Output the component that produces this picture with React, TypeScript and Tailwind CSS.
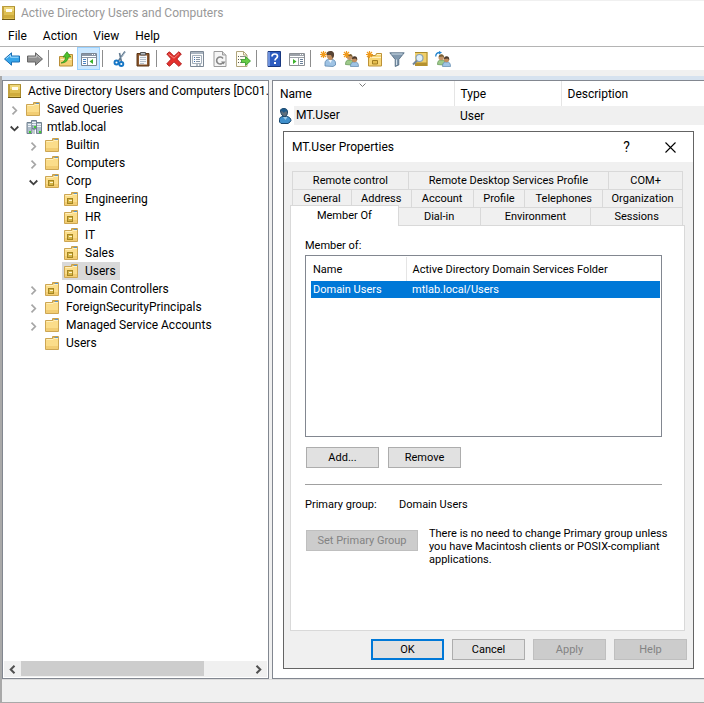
import { useState } from "react";
import type { ReactNode } from "react";

/* ICONS */

function Svg({ children, size = 16 }: { children: ReactNode; size?: number }) {
  return (
    <svg
      width={size}
      height={size}
      viewBox="0 0 16 16"
      fill="none"
      aria-hidden="true"
      className="shrink-0"
    >
      {children}
    </svg>
  );
}

function BookIcon() {
  return (
    <Svg>
      <path d="M1 1h13v14H1z" fill="#dfc052" />
      <path d="M1 1h13v1H1z" fill="#b59a3d" />
      <path d="M1 1h2v14H1z" fill="#c3a240" />
      <path d="M3 2h10v4H3z" fill="#efd779" />
      <path d="M5 4h6v3H5z" fill="#fffdf0" />
      <path d="M3 10h11v3H3z" fill="#cfac3c" />
      <path d="M13 2h1v12h-1z" fill="#a98a2b" />
      <path d="M1 14h13v1H1z" fill="#6f5a17" />
    </Svg>
  );
}

function FolderIcon() {
  return (
    <Svg>
      <path d="M7.500 5V1.500h6V5" fill="#fff3c4" stroke="#c9a04a" />
      <path d="M10 2.500h3" stroke="#4f8fd0" />
      <path d="M.5 3.500h7l1-1h5v12H.5z" fill="#fbdd8a" stroke="#cda653" />
      <path d="M10 2.500h3" stroke="#5b97cf" />
      <path d="M1.500 4.500h6.500l1-1h4" stroke="#fff0bd" />
      <path d="M1 11h12v3H1z" fill="#f2cd73" />
    </Svg>
  );
}

function UnitIcon() {
  return (
    <Svg>
      <path d="M7.500 5V1.500h6V5" fill="#fff3c4" stroke="#c9a04a" />
      <path d="M.5 3.500h7l1-1h5v12H.5z" fill="#fbdd8a" stroke="#cda653" />
      <path d="M10 2.500h3" stroke="#5b97cf" />
      <path d="M1.500 4.500h6.500l1-1h4" stroke="#fff0bd" />
      <path d="M1 11h12v3H1z" fill="#f2cd73" />
      <path d="M3 7h6v6H3z" fill="#a48522" />
      <path d="M4 8h4v4H4z" fill="#d5b548" />
      <path d="M5 9h3v1H5z" fill="#fff6cf" />
    </Svg>
  );
}

function DomainIcon() {
  return (
    <Svg>
      <path d="M5.500 1.500h5v8h-5z" fill="#a9bac9" stroke="#6d7f90" />
      <path d="M1 3.500h5v11H1z" fill="#aebdca" stroke="#72828f" />
      <path d="M10.500 3.500h5v11h-5z" fill="#aebdca" stroke="#72828f" />
      <path d="M6 3.500h4M6 5.500h4M2 5.500h3M2 7.500h3M11 5.500h4M11 7.500h4" stroke="#eef3f7" />
      <path d="M6.500 10.500h3M8 9v6" stroke="#8496a5" />
      <path d="M3 12h2v2H3zM13 12h2v2h-2zM8 7h2v2H8z" fill="#3fd12c" />
    </Svg>
  );
}

function PersonIcon() {
  return (
    <Svg>
      <path d="M1.500 14v-2.500c0-2 1.500-3 3.500-3h3.500c2.500 0 4.500 2 4.500 4l-1 1.500-2 1.500H3z" fill="#3f8fcb" stroke="#17476f" />
      <path d="M5 9l2.500 3L9.500 9" fill="#9ccbe9" />
      <path d="M2.500 3c0-2 1.500-2.500 3.500-2.500s3.500 1 3.500 3.500-1 4.500-3 4.500S3 6.500 2.500 3z" fill="#5f6f7c" stroke="#1d4465" />
      <path d="M2.500 3c0-2 1.500-2.500 3.500-2.500s3.300 1 3.300 3L7 3.500 6 5 4.500 3.500z" fill="#1f5a8a" />
    </Svg>
  );
}

function BackIcon() {
  return (
    <Svg>
      <path d="M.5 8L7.500 1.800V5h8v6h-8v3.200z" fill="#35a5ea" stroke="#1b6fb5" />
      <path d="M2.300 7.500L6.500 4v2.200h8" stroke="#a8dcfb" />
    </Svg>
  );
}

function ForwardIcon() {
  return (
    <Svg>
      <path d="M15.500 8L8.500 1.800V5h-8v6h8v3.200z" fill="#8f8f8f" stroke="#666" />
      <path d="M1.500 6.200h8V4l4 3.500" stroke="#c2c2c2" />
    </Svg>
  );
}

function UpFolderIcon() {
  return (
    <Svg>
      <path d="M1.500 5.500h7l1-2h5v11.500h-13z" fill="#f3cf74" stroke="#b98e37" />
      <path d="M2.500 8.500h11" stroke="#fff0c0" />
      <path d="M3 12c3-1 4.500-3 4.500-6H5L9 .8l3.800 5.200H10.300C10 10 7 12 3 12z" fill="#4fc22d" stroke="#2b8a1a" strokeWidth=".7" />
    </Svg>
  );
}

function TreePaneIcon() {
  return (
    <Svg>
      <path d="M.5 2.500h15v12H.5z" fill="#fff" stroke="#7c8794" />
      <path d="M1 3h14v2H1z" fill="#8a96a5" />
      <path d="M11 3.500h3" stroke="#fff" strokeDasharray="1 1" />
      <path d="M1 6.500h14M6.500 7v7" stroke="#8a96a5" />
      <path d="M2 8.500h3M2 10.500h3M2 12.500h3" stroke="#4b84c4" />
      <path d="M12 8v5l-3.500-2.500z" fill="#3bb22b" />
    </Svg>
  );
}

function CutIcon() {
  return (
    <Svg>
      <path d="M13 .5L6 10.500M7.500 2L9.500 11" stroke="#61798f" strokeWidth="1.600" />
      <path d="M13.500 1L9 7" stroke="#b3c4d2" />
      <circle cx="4.500" cy="11.500" r="2" stroke="#1676c5" strokeWidth="1.900" />
      <circle cx="9.300" cy="13" r="2" stroke="#1676c5" strokeWidth="1.900" />
    </Svg>
  );
}

function PasteIcon() {
  return (
    <Svg>
      <path d="M2 2.500h12v12.500H2z" fill="#8b572d" stroke="#5d3717" />
      <path d="M4 4.500h8v9H4z" fill="#f6f8fa" />
      <path d="M5 6.500h6M5 8.500h6M5 10.500h6M5 12.500h4" stroke="#b4bfca" />
      <path d="M5.500 1.500h5v2.500h-5z" fill="#b6bcc2" stroke="#555" />
    </Svg>
  );
}

function DeleteIcon() {
  return (
    <Svg>
      <path d="M.8 3L3.500.8 8 5.300 12.800.8l2.500 2.200L10.800 8l4.700 5-2.700 2.300L8 10.800 3.500 15.300.8 12.800 5.300 8z" fill="#e5302c" stroke="#b3201f" />
      <path d="M2.500 3l5.500 4.200L13 2.500" stroke="#f68a80" />
    </Svg>
  );
}

function PropertiesIcon() {
  return (
    <Svg>
      <path d="M1.500.5h13v15h-13z" fill="#fafbfc" stroke="#7b8794" />
      <path d="M2 1h12v2H2z" fill="#a9b4c0" />
      <path d="M3.500 4.500h9v8h-9z" stroke="#a5b0bc" />
      <path d="M5 6.500h1M5 8.500h1M5 10.500h1" stroke="#3d6fb0" />
      <path d="M7 6.500h4M7 8.500h4M7 10.500h4" stroke="#8695a5" />
      <path d="M7 14h2M10 14h2" stroke="#6d7c8c" />
    </Svg>
  );
}

function RefreshIcon() {
  return (
    <Svg>
      <path d="M2 .5h8.500L14 4v11.500H2z" fill="#f6f6f6" stroke="#9b9b9b" />
      <path d="M10.500.5V4H14" fill="#d7d7d7" stroke="#9b9b9b" />
      <path d="M11 7.500A3.500 3.500 0 1 0 11.300 11" stroke="#878787" strokeWidth="1.600" />
      <path d="M9 10.500h4.500l-2 3z" fill="#878787" />
    </Svg>
  );
}

function ExportIcon() {
  return (
    <Svg>
      <path d="M1.500.5h7L12 4v11.500H1.500z" fill="#fffdf2" stroke="#b0a57c" />
      <path d="M8.500.5V4H12" stroke="#b0a57c" />
      <path d="M3 5.500h1M3 8.500h1M3 11.500h1" stroke="#555" />
      <path d="M5 5.500h5M5 8.500h2M5 11.500h2" stroke="#8b8b8b" />
      <path d="M6.500 8.500h4V5.500l5 4.500-5 4.500v-3h-4z" fill="#67cc45" stroke="#2f9423" strokeWidth=".8" />
    </Svg>
  );
}

function HelpIcon() {
  return (
    <Svg>
      <path d="M2 .5h12.500v15H2z" fill="#2d5cc0" stroke="#18377f" />
      <path d="M2 1h2v14H2z" fill="#6d92dd" />
      <path d="M6 5.500C6 3.800 7.200 3 8.700 3s2.800.9 2.800 2.300c0 2-2.500 2.200-2.500 4.200" stroke="#fff" strokeWidth="1.700" />
      <path d="M8 11h2v2H8z" fill="#fff" />
    </Svg>
  );
}

function ActionPaneIcon() {
  return (
    <Svg>
      <path d="M.5 2.500h15v12H.5z" fill="#fff" stroke="#8b8f94" />
      <path d="M1 3h14v2H1z" fill="#9ca2a9" />
      <path d="M11 3.500h3" stroke="#fff" strokeDasharray="1 1" />
      <path d="M1 6.500h14M9.500 7v7" stroke="#9ca2a9" />
      <path d="M11 8.500h3M11 10.500h3M11 12.500h3" stroke="#697f98" />
      <path d="M4 8v5l3.500-2.500z" fill="#3bb22b" />
    </Svg>
  );
}

function Spark() {
  return (
    <path
      d="M3.500 0v7M0 3.500h7M1 1l5 5M6 1L1 6"
      stroke="#f09a1c"
      strokeWidth="1.200"
    />
  );
}

function NewUserIcon() {
  return (
    <Svg>
      <path d="M5 15v-3c0-2 1.500-3.500 3.500-3.500H12c2 0 3.500 1.500 3.500 3.500v2L13 15.500z" fill="#9fc3e4" stroke="#5c86ae" strokeWidth=".8" />
      <path d="M8.500 9l2 3 1.500-3" fill="#eef6fc" />
      <path d="M6.500 4c0-2.500 1.500-3.500 4-3.500s3.500 1.500 3.300 4-1.300 4.500-3.300 4.500-3.500-1.500-4-5z" fill="#c18d5e" />
      <path d="M6.300 4C6.300 1 8 0 10.500 0s4 1.500 3.500 5l-1.300 2.500L11 4z" fill="#584436" />
      <Spark />
    </Svg>
  );
}

function NewGroupIcon() {
  return (
    <Svg>
      <path d="M2.500 13.500c0-3 1-4.500 3-4.500h2c2 0 3 1.500 3 4L8 14z" fill="#9ec98a" stroke="#5d9150" strokeWidth=".7" />
      <circle cx="6.700" cy="6.300" r="2.700" fill="#c59468" />
      <path d="M4.300 5.500C4.300 3.500 5.500 3 7 3s2.800 1 2.600 3.500L8 5z" fill="#7a6134" />
      <path d="M7.500 15.500c0-3 1-4.500 3-4.500h2c2 0 3 1.500 3 4.500z" fill="#9fc3e4" stroke="#5c86ae" strokeWidth=".7" />
      <circle cx="11.500" cy="8.500" r="2.700" fill="#c18d5e" />
      <path d="M9 8c0-2 1.200-2.700 2.700-2.700s2.700 1 2.500 3.700l-1.700-1.500z" fill="#4b3a2d" />
      <Spark />
    </Svg>
  );
}

function NewUnitIcon() {
  return (
    <Svg>
      <path d="M2.500 4.500h7l1-2h5v12.500h-13z" fill="#f7d677" stroke="#bd9237" />
      <path d="M11 3.500h4" stroke="#fff3c4" />
      <path d="M3.500 6.500h11.500" stroke="#fff0bd" />
      <path d="M6.500 9.500h5v3.500h-5z" fill="#e4bd4e" stroke="#a17d21" />
      <Spark />
    </Svg>
  );
}

function FilterIcon() {
  return (
    <Svg>
      <path d="M.8 1.800h14.400L9.800 8.500v5.500L6.200 15.500v-7z" fill="#7f97ad" stroke="#4d667c" strokeWidth=".8" />
      <path d="M2.500 3h11" stroke="#cfdce7" />
      <path d="M7.500 8.500v5.500" stroke="#d4e0ea" />
    </Svg>
  );
}

function FindIcon() {
  return (
    <Svg>
      <path d="M3 1h12.500v14H3z" fill="#f0cf6a" />
      <path d="M3 1h12.500v1H3zM14.500 1h1v14h-1z" fill="#a98a2b" />
      <path d="M3 11.500h12v3.500H3z" fill="#b5912f" />
      <circle cx="7.500" cy="7" r="3.500" fill="#dceefa" stroke="#8ba3b8" strokeWidth="1.200" />
      <path d="M5 9.500L1 13.500" stroke="#73879a" strokeWidth="2" />
    </Svg>
  );
}

function AddToGroupIcon() {
  return (
    <Svg>
      <path d="M2.500 13.500c0-3 1-4.500 3-4.500h2c2 0 3 1.500 3 4L8 14z" fill="#9ec98a" stroke="#5d9150" strokeWidth=".7" />
      <circle cx="6.200" cy="6.500" r="2.700" fill="#c59468" />
      <path d="M3.800 6c0-2 1.200-2.700 2.700-2.700S9.200 4.500 9 6.700L7.500 5.500z" fill="#7a6134" />
      <path d="M7.500 15.500c0-3 1-4.500 3-4.500h2c2 0 3 1.500 3 4.500z" fill="#9fc3e4" stroke="#5c86ae" strokeWidth=".7" />
      <circle cx="11.500" cy="8.500" r="2.700" fill="#c18d5e" />
      <path d="M9 8c0-2 1.200-2.700 2.700-2.700s2.700 1 2.500 3.700l-1.700-1.500z" fill="#4b3a2d" />
      <path d="M.7 5.500C.7 3 2 1.500 5 1.500" stroke="#2485cf" strokeWidth="1.300" />
      <path d="M4 0l3 1.500-3 2z" fill="#2485cf" />
    </Svg>
  );
}

/* DATA */

const menus = ["File", "Action", "View", "Help"];

const toolGroups = [
  [
    { label: "Back", icon: <BackIcon /> },
    { label: "Forward", icon: <ForwardIcon /> },
  ],
  [
    { label: "Up one level", icon: <UpFolderIcon /> },
    { label: "Show/Hide console tree", icon: <TreePaneIcon />, pressed: true },
  ],
  [
    { label: "Cut", icon: <CutIcon /> },
    { label: "Paste", icon: <PasteIcon /> },
  ],
  [
    { label: "Delete", icon: <DeleteIcon /> },
    { label: "Properties", icon: <PropertiesIcon /> },
    { label: "Refresh", icon: <RefreshIcon /> },
    { label: "Export list", icon: <ExportIcon /> },
  ],
  [
    { label: "Help topics", icon: <HelpIcon /> },
    { label: "Show/Hide action pane", icon: <ActionPaneIcon /> },
  ],
  [
    { label: "New user", icon: <NewUserIcon /> },
    { label: "New group", icon: <NewGroupIcon /> },
    { label: "New organizational unit", icon: <NewUnitIcon /> },
    { label: "Filter", icon: <FilterIcon /> },
    { label: "Find", icon: <FindIcon /> },
    { label: "Add to group", icon: <AddToGroupIcon /> },
  ],
];

type Node = {
  id: string;
  name: string;
  icon: "folder" | "unit" | "domain";
  state?: "open" | "closed";
  children?: Node[];
};

const tree: Node[] = [
  { id: "queries", name: "Saved Queries", icon: "folder", state: "closed" },
  {
    id: "domain",
    name: "mtlab.local",
    icon: "domain",
    state: "open",
    children: [
      { id: "builtin", name: "Builtin", icon: "folder", state: "closed" },
      { id: "computers", name: "Computers", icon: "folder", state: "closed" },
      {
        id: "corp",
        name: "Corp",
        icon: "unit",
        state: "open",
        children: [
          { id: "engineering", name: "Engineering", icon: "unit" },
          { id: "hr", name: "HR", icon: "unit" },
          { id: "it", name: "IT", icon: "unit" },
          { id: "sales", name: "Sales", icon: "unit" },
          { id: "corp-users", name: "Users", icon: "unit" },
        ],
      },
      { id: "dc", name: "Domain Controllers", icon: "unit", state: "closed" },
      { id: "fsp", name: "ForeignSecurityPrincipals", icon: "folder", state: "closed" },
      { id: "msa", name: "Managed Service Accounts", icon: "folder", state: "closed" },
      { id: "users", name: "Users", icon: "folder" },
    ],
  },
];

const tabRows = [
  {
    grid: "grid-cols-[116fr_201fr_74fr]",
    tabs: ["Remote control", "Remote Desktop Services Profile", "COM+"],
  },
  {
    grid: "grid-cols-[59fr_60fr_62fr_52fr_78fr_80fr]",
    tabs: ["General", "Address", "Account", "Profile", "Telephones", "Organization"],
  },
];

/* TREE */

function TreeItems({
  nodes,
  selected,
  onSelect,
}: {
  nodes: Node[];
  selected: string;
  onSelect: (id: string) => void;
}) {
  return (
    <>
      {nodes.map((node) => (
        <li key={node.id}>
          <div className="flex h-[18px] items-center">
            <span className="flex w-[19px] shrink-0 justify-center pt-[2px]">
              {node.state && (
                <svg width="9" height="9" viewBox="0 0 9 9" fill="none" aria-hidden="true">
                  {node.state === "open" ? (
                    <path d="M.7 2.500L4.500 6.300 8.300 2.500" stroke="#404040" strokeWidth="1.800" />
                  ) : (
                    <path d="M2.500.7L6.300 4.500 2.500 8.300" stroke="#a6a6a6" strokeWidth="1.700" />
                  )}
                </svg>
              )}
            </span>
            <button
              onClick={() => onSelect(node.id)}
              className={`flex h-[18px] items-center gap-[5px] pr-1 pl-[2px] whitespace-nowrap ${
                selected === node.id ? "bg-[#d9d9d9]" : ""
              }`}
            >
              {node.icon === "folder" && <FolderIcon />}
              {node.icon === "unit" && <UnitIcon />}
              {node.icon === "domain" && <DomainIcon />}
              {node.name}
            </button>
          </div>
          {node.children && (
            <ul className="pl-[19px]">
              <TreeItems nodes={node.children} selected={selected} onSelect={onSelect} />
            </ul>
          )}
        </li>
      ))}
    </>
  );
}

function ScrollArrow({ label, d }: { label: string; d: string }) {
  return (
    <button aria-label={label} className="flex w-[17px] items-center justify-center">
      <svg width="9" height="9" viewBox="0 0 9 9" fill="none" aria-hidden="true">
        <path d={d} stroke="#505050" strokeWidth="2" />
      </svg>
    </button>
  );
}

/* DIALOG */

function Tab({ name, className = "" }: { name: string; className?: string }) {
  return (
    <button
      role="tab"
      className={`h-[18px] border-t border-l border-[#d9d9d9] text-center whitespace-nowrap ${className}`}
    >
      {name}
    </button>
  );
}

function PushButton({
  children,
  isDefault,
  disabled,
  wide,
}: {
  children: ReactNode;
  isDefault?: boolean;
  disabled?: boolean;
  wide?: boolean;
}) {
  const look = disabled
    ? "border border-[#bfbfbf] bg-[#cccccc] text-[#838383]"
    : isDefault
      ? "border-2 border-[#0078d7] bg-[#e1e1e1]"
      : "border border-[#adadad] bg-[#e1e1e1]";

  return (
    <button
      disabled={disabled}
      className={`flex h-[21px] shrink-0 items-center justify-center ${wide ? "w-[112px]" : "w-[73px]"} ${look}`}
    >
      {children}
    </button>
  );
}

function PropertiesDialog() {
  return (
    <div
      role="dialog"
      aria-label="MT.User Properties"
      className="absolute top-[50px] right-[10px] left-[10px] border border-[#646464] bg-[#f0f0f0] font-[Roboto,'Liberation_Sans',sans-serif] text-[11px] leading-[13px]"
    >
      <div className="flex h-[30px] items-center bg-white pr-[10px] pl-2 text-[12px]">
        <h2 className="flex-1">MT.User Properties</h2>
        <button aria-label="Context help" className="w-[45px] pr-4 text-[14px]">
          ?
        </button>
        <button aria-label="Close" className="flex w-[26px] justify-center">
          <svg width="11" height="11" viewBox="0 0 11 11" aria-hidden="true">
            <path d="M.5.5l10 10M10.500.5l-10 10" stroke="#000" strokeWidth="1.100" />
          </svg>
        </button>
      </div>

      <div className="pt-[9px] pr-2 pl-[6px]">
        <div role="tablist">
          {tabRows.map((row) => (
            <div
              key={row.grid}
              className={`mr-[2px] ml-[2px] grid border-r border-[#d9d9d9] ${row.grid}`}
            >
              {row.tabs.map((name) => (
                <Tab key={name} name={name} />
              ))}
            </div>
          ))}
          <div className="mr-[2px] grid grid-cols-[109fr_81fr_111fr_92fr] border-r border-[#d9d9d9]">
            <button
              role="tab"
              aria-selected="true"
              className="relative -mt-[2px] -mb-px border-x border-t border-[#d9d9d9] bg-white pb-[2px]"
            >
              Member Of
            </button>
            <Tab name="Dial-in" className="border-l-0" />
            <Tab name="Environment" />
            <Tab name="Sessions" />
          </div>
        </div>

        <div role="tabpanel" className="border border-[#d9d9d9] bg-white pt-[13px] pr-[22px] pb-16 pl-[14px]">
          <p>Member of:</p>
          <div className="mt-[3px] h-[182px] border border-[#828790] px-px pt-px">
            <table className="w-full table-fixed border-collapse text-left">
              <thead>
                <tr className="h-6">
                  <th className="w-[99px] border-r border-[#e5e5e5] pl-[6px] font-normal">Name</th>
                  <th className="pl-[6px] font-normal">Active Directory Domain Services Folder</th>
                </tr>
              </thead>
              <tbody>
                <tr className="h-[17px] text-white">
                  <td className="pl-1">
                    <div className="bg-[#0078d7] py-[2px] pl-[2px]">Domain Users</div>
                  </td>
                  <td className="bg-[#0078d7] pl-[6px]">mtlab.local/Users</td>
                </tr>
              </tbody>
            </table>
          </div>

          <div className="mt-[10px] ml-px flex gap-[9px]">
            <PushButton>Add...</PushButton>
            <PushButton>Remove</PushButton>
          </div>

          <hr className="mt-4 border-[#a0a0a0]" />

          <dl className="mt-[13px] flex">
            <dt className="w-[94px]">Primary group:</dt>
            <dd>Domain Users</dd>
          </dl>

          <div className="mt-4 ml-px flex gap-[11px]">
            <div className="pt-[3px]">
              <PushButton wide disabled>
                Set Primary Group
              </PushButton>
            </div>
            <p className="-mr-3">
              There is no need to change Primary group unless you have Macintosh
              clients or POSIX-compliant applications.
            </p>
          </div>
        </div>
      </div>

      <div className="flex justify-end gap-2 pt-2 pr-[6px] pb-2">
        <PushButton isDefault>OK</PushButton>
        <PushButton>Cancel</PushButton>
        <PushButton disabled>Apply</PushButton>
        <PushButton disabled>Help</PushButton>
      </div>
    </div>
  );
}

export default function App() {
  const [selected, setSelected] = useState("corp-users");

  return (
    <div className="flex min-h-screen flex-col border-t border-[#f0f0f0] bg-white font-[Roboto,'Open_Sans',sans-serif] text-[12px] leading-4 text-black">
      {/* TITLE BAR */}
      <header className="flex h-6 items-center gap-[4px] pl-px text-[#999999]">
        <BookIcon />
        <h1>Active Directory Users and Computers</h1>
      </header>

      {/* MENU BAR */}
      <nav className="flex h-[21px] items-center gap-4 pl-2">
        {menus.map((menu) => (
          <button key={menu}>{menu}</button>
        ))}
      </nav>

      {/* TOOLBAR */}
      <div role="toolbar" className="flex h-6 border-t border-[#b4b4b4]">
        {toolGroups.map((group, index) => (
          <div key={group[0].label} className="flex">
            {index > 0 && <div className="mr-[5px] ml-[2px] my-[3px] w-px bg-[#8d8d8d]" />}
            {group.map((tool) => (
              <button
                key={tool.label}
                aria-label={tool.label}
                className={`flex w-[23px] items-center justify-center ${
                  tool.pressed ? "border border-[#99d1ff] bg-[#cce8ff]" : ""
                }`}
              >
                {tool.icon}
              </button>
            ))}
          </div>
        ))}
      </div>
      <div className="h-[6px] bg-[#f0f0f0]" />

      <div className="flex flex-1 flex-col border-b border-l-2 border-[#a9a9a9] bg-[#f0f0f0]">
        <div className="h-1 bg-[#d6e2ef]" />

        <main className="flex flex-1 gap-[3px]">
          {/* CONSOLE TREE */}
          <section className="flex w-[267px] shrink-0 flex-col border border-[#828790] bg-white">
            <ul className="flex-1 overflow-hidden pt-px pl-[2px]">
              <li>
                <div className="flex h-[18px] items-center gap-[5px] pl-[2px] whitespace-nowrap">
                  <BookIcon />
                  Active Directory Users and Computers [DC01.
                </div>
                <ul>
                  <TreeItems nodes={tree} selected={selected} onSelect={setSelected} />
                </ul>
              </li>
            </ul>
            <div className="m-px flex h-4 bg-[#f0f0f0]">
              <ScrollArrow label="Scroll left" d="M6.500.7L2.700 4.500 6.500 8.300" />
              <div className="flex-1">
                <div className="h-[15px] w-4/5 bg-[#cdcdcd]" />
              </div>
              <ScrollArrow label="Scroll right" d="M2.500.7L6.300 4.500 2.500 8.300" />
            </div>
          </section>

          {/* OBJECT LIST */}
          <section className="relative min-h-[599px] flex-1 border-y border-l border-[#828790] bg-white">
            <table className="w-full table-fixed border-collapse text-left">
              <thead>
                <tr className="h-[25px]">
                  <th className="relative w-[181px] border-r border-[#e5e5e5] pl-[7px] font-normal">
                    Name
                    <svg
                      width="7"
                      height="4"
                      viewBox="0 0 7 4"
                      fill="none"
                      aria-hidden="true"
                      className="absolute top-[2px] left-1/2 -ml-1"
                    >
                      <path d="M.5.5l3 3 3-3" stroke="#7a7a7a" />
                    </svg>
                  </th>
                  <th className="w-[107px] border-r border-[#e5e5e5] pl-[6px] font-normal">Type</th>
                  <th className="pl-[6px] font-normal">Description</th>
                </tr>
              </thead>
              <tbody>
                <tr>
                  <td>
                    <div className="flex pl-[5px]">
                      <span className="flex w-4 items-center">
                        <PersonIcon />
                      </span>
                      <span className="h-[19px] flex-1 bg-[#f0f0f0] pl-[2px] leading-[19px]">
                        MT.User
                      </span>
                    </div>
                  </td>
                  <td className="bg-[#f0f0f0] pl-[6px]">User</td>
                  <td className="bg-[#f0f0f0]" />
                </tr>
              </tbody>
            </table>

            <PropertiesDialog />
          </section>
        </main>

        {/* STATUS BAR */}
        <footer className="h-[23px] border-t border-[#dcdcdc]" />
      </div>
    </div>
  );
}
